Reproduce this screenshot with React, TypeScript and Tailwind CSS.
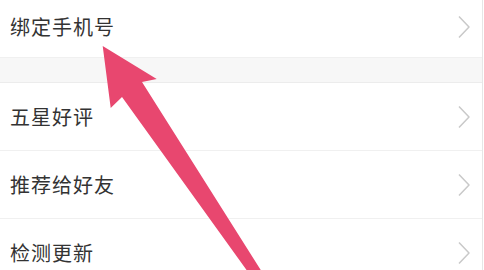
import React from "react";

const font = { fontFamily: '"Noto Sans CJK SC", "Noto Sans", sans-serif' };

function Chevron() {
  return (
    <svg width="14" height="24" viewBox="0 0 14 24" fill="none" className="shrink-0">
      <path d="M2 1.5 L12 12 L2 22.5" stroke="#c9c9c9" strokeWidth="1.5" strokeLinejoin="round" />
    </svg>
  );
}

function Row({ label, className }: { label: string; className?: string }) {
  return (
    <div
      className={`flex items-center justify-between border-b border-[#f0f0f0] bg-white pl-[10px] pr-[11px] ${className ?? "h-[68px]"}`}
    >
      <span className="text-[20px] leading-none tracking-[1px] text-[#333333]">{label}</span>
      <Chevron />
    </div>
  );
}

export default function App() {
  return (
    <div className="relative h-[270px] w-[484px] overflow-hidden bg-white" style={font}>
      <div className="w-[483px] border-r border-[#e6e6e6]">
        <Row label="绑定手机号" className="h-[68px] -mt-[10px] pt-[6px] border-[#ececec]" />
        <div className="h-[25px] border-b border-[#ececec] bg-[#f7f7f7]" />
        <Row label="五星好评" />
        <Row label="推荐给好友" />
        <Row label="检测更新" />
      </div>

      {/* pink arrow overlay */}
      <svg className="pointer-events-none absolute left-0 top-0" width="484" height="270" viewBox="0 0 484 270">
        <polygon
          points="102.7,46 156.7,79 142,82 262,272 248,272 122,97 110.7,108"
          fill="#e8476f"
        />
      </svg>
    </div>
  );
}
